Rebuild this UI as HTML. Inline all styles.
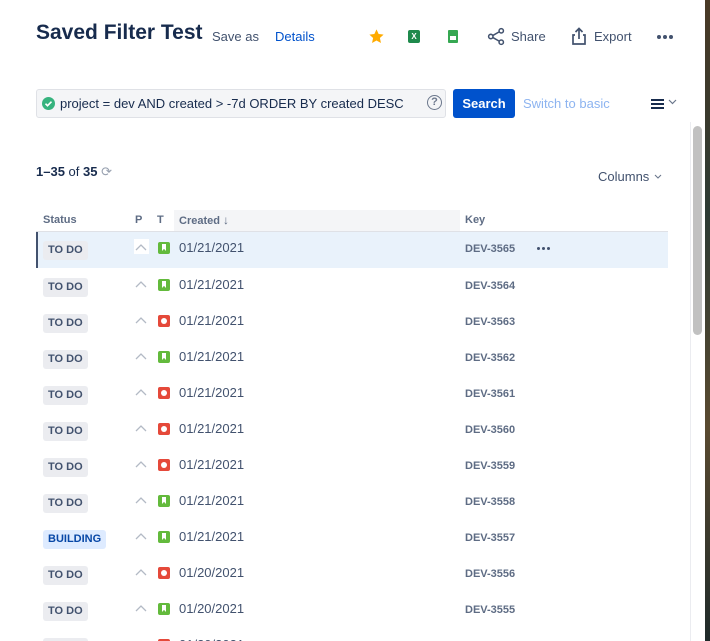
<!DOCTYPE html>
<html><head><meta charset="utf-8"><style>
*{margin:0;padding:0;box-sizing:border-box}
html,body{width:710px;height:641px;overflow:hidden}
body{background:#fff;font-family:"Liberation Sans",sans-serif;position:relative;color:#172b4d}
.a{position:absolute}
.edge{left:705px;top:0;width:5px;height:641px;background:linear-gradient(#4a3a26,#2c3a33,#5a4a30,#1f2a2a)}
.row{position:absolute;left:36px;width:632px;height:36px}
.st{position:absolute;left:7px;top:9px;height:19px;padding:0 5px;background:#ebecf0;border-radius:3px;font-size:11px;font-weight:bold;color:#42526e;line-height:19px}
.pr{position:absolute;left:99px;top:11px;width:12px;height:8px}
.ty{position:absolute;left:122px;top:10px;width:12px;height:12px;border-radius:2px}
.g{background:#63ba3c}.r{background:#e5493a}
.g:after{content:"";position:absolute;left:4px;top:2px;width:4px;height:7px;background:#fff;clip-path:polygon(0 0,100% 0,100% 100%,50% 70%,0 100%)}
.r:after{content:"";position:absolute;left:3px;top:3px;width:6px;height:6px;border-radius:50%;background:#fff}
.dt{position:absolute;left:143px;top:8px;font-size:13px;color:#42526e}
.k{position:absolute;left:429px;top:11px;font-size:11px;font-weight:bold;color:#5e6c84}
</style></head><body>
<div class="a edge"></div>
<div class="a" style="left:36px;top:21px;font-size:21px;font-weight:bold;color:#172b4d">Saved Filter Test</div>
<div class="a" style="left:212px;top:29px;font-size:13px;color:#42526e">Save as</div>
<div class="a" style="left:275px;top:29px;font-size:13px;color:#0052cc">Details</div>
<svg class="a" style="left:368px;top:28px" width="17" height="17" viewBox="0 0 24 24"><path d="M12 2l3 6.5 7 .8-5.2 4.8 1.5 7L12 17.6 5.7 21.1l1.5-7L2 9.3l7-.8z" fill="#ffab00"/></svg>
<div class="a" style="left:408px;top:30px;width:12px;height:13px;background:#1f8a4c;border-radius:2px;color:#fff;font-size:8px;font-weight:bold;line-height:13px;text-align:center">X</div>
<div class="a" style="left:448px;top:30px;width:10px;height:13px;background:#36a852;border-radius:1px"><div style="position:absolute;left:2px;top:6px;width:6px;height:4px;background:#fff"></div></div>
<svg class="a" style="left:487px;top:27px" width="19" height="19" viewBox="0 0 20 20" fill="none" stroke="#42526e" stroke-width="1.6"><circle cx="15" cy="4" r="2.3"/><circle cx="4" cy="10" r="2.3"/><circle cx="15" cy="16" r="2.3"/><path d="M6 9l7-4M6 11l7 4"/></svg>
<div class="a" style="left:511px;top:29px;font-size:13px;color:#42526e">Share</div>
<svg class="a" style="left:571px;top:27px" width="16" height="19" viewBox="0 0 16 19" fill="none" stroke="#42526e" stroke-width="1.7"><path d="M4 8H2v9h12V8h-2M8 12V2M4.5 5L8 1.5 11.5 5"/></svg>
<div class="a" style="left:594px;top:29px;font-size:13px;color:#42526e">Export</div>
<div class="a" style="left:657px;top:35px;width:4px;height:4px;border-radius:50%;background:#42526e;box-shadow:6px 0 0 #42526e,12px 0 0 #42526e"></div>
<div class="a" style="left:36px;top:89px;width:410px;height:29px;background:#f4f5f7;border:1px solid #dfe1e6;border-radius:3px"></div>
<div class="a" style="left:42px;top:97px;width:13px;height:13px;border-radius:50%;background:#36b37e"><svg width="13" height="13" viewBox="0 0 13 13"><path d="M3.5 6.7l2 2 4-4" stroke="#fff" stroke-width="1.6" fill="none"/></svg></div>
<div class="a" style="left:60px;top:96px;font-size:13px;color:#172b4d">project = dev AND created &gt; -7d ORDER BY created DESC</div>
<div class="a" style="left:427px;top:95px;width:15px;height:15px;border:1.5px solid #6b778c;border-radius:50%;font-size:11px;text-align:center;line-height:12px;color:#6b778c;font-weight:bold">?</div>
<div class="a" style="left:453px;top:89px;width:62px;height:29px;background:#0052cc;border-radius:3px;color:#fff;font-size:13px;font-weight:bold;text-align:center;line-height:29px">Search</div>
<div class="a" style="left:523px;top:96px;font-size:13px;color:#8db4f0">Switch to basic</div>
<div class="a" style="left:651px;top:99px;width:13px;height:2px;background:#172b4d;box-shadow:0 4px 0 #172b4d,0 8px 0 #172b4d"></div>
<svg class="a" style="left:668px;top:99px" width="9" height="6"><path d="M1 1l3.5 3.5L8 1" stroke="#6b778c" fill="none" stroke-width="1.2"/></svg>
<div class="a" style="left:690px;top:122px;width:1px;height:519px;background:#ebecf0"></div>
<div class="a" style="left:693px;top:126px;width:9px;height:209px;background:#c1c1c1;border-radius:5px"></div>
<div class="a" style="left:36px;top:164px;font-size:13px;color:#172b4d"><b>1–35</b> of <b>35</b> <span style="color:#97a0af;font-size:13px">⟳</span></div>
<div class="a" style="left:598px;top:169px;font-size:13px;color:#42526e">Columns</div>
<svg class="a" style="left:654px;top:174px" width="8" height="6"><path d="M1 1l3 3 3-3" stroke="#6b778c" fill="none" stroke-width="1.1"/></svg>
<div class="a" style="left:174px;top:210px;width:286px;height:21px;background:#f4f5f7"></div>
<div class="a" style="left:36px;top:231px;width:632px;height:1px;background:#dfe1e6"></div>
<div class="a" style="left:43px;top:214px;font-size:11px;font-weight:bold;color:#5e6c84">Status</div>
<div class="a" style="left:135px;top:214px;font-size:11px;font-weight:bold;color:#5e6c84">P</div>
<div class="a" style="left:157px;top:214px;font-size:11px;font-weight:bold;color:#5e6c84">T</div>
<div class="a" style="left:179px;top:213px;font-size:11px;font-weight:bold;color:#5e6c84">Created <span style="font-size:12px">↓</span></div>
<div class="a" style="left:465px;top:214px;font-size:11px;font-weight:bold;color:#5e6c84">Key</div>
<div class="row" style="top:232px;background:#e9f2fb;border-left:2px solid #42526e"></div>
<svg width="0" height="0" style="position:absolute"><defs><path id="ch" d="M1 7l5-5 5 5" stroke="#b3bac5" stroke-width="1.3" fill="none"/></defs></svg>
<div class="row" style="top:232px"><div class="a" style="left:98px;top:7px;width:15px;height:15px;background:#fff"></div><div class="st">TO DO</div><svg class="pr"><use href="#ch"/></svg><div class="ty g"></div><div class="dt">01/21/2021</div><div class="k">DEV-3565</div><div class="a" style="left:501px;top:15px;width:3px;height:3px;border-radius:50%;background:#42526e;box-shadow:5px 0 0 #42526e,10px 0 0 #42526e"></div></div>
<div class="row" style="top:269px"><div class="st">TO DO</div><svg class="pr"><use href="#ch"/></svg><div class="ty g"></div><div class="dt">01/21/2021</div><div class="k">DEV-3564</div></div>
<div class="row" style="top:305px"><div class="st">TO DO</div><svg class="pr"><use href="#ch"/></svg><div class="ty r"></div><div class="dt">01/21/2021</div><div class="k">DEV-3563</div></div>
<div class="row" style="top:341px"><div class="st">TO DO</div><svg class="pr"><use href="#ch"/></svg><div class="ty g"></div><div class="dt">01/21/2021</div><div class="k">DEV-3562</div></div>
<div class="row" style="top:377px"><div class="st">TO DO</div><svg class="pr"><use href="#ch"/></svg><div class="ty r"></div><div class="dt">01/21/2021</div><div class="k">DEV-3561</div></div>
<div class="row" style="top:413px"><div class="st">TO DO</div><svg class="pr"><use href="#ch"/></svg><div class="ty r"></div><div class="dt">01/21/2021</div><div class="k">DEV-3560</div></div>
<div class="row" style="top:449px"><div class="st">TO DO</div><svg class="pr"><use href="#ch"/></svg><div class="ty r"></div><div class="dt">01/21/2021</div><div class="k">DEV-3559</div></div>
<div class="row" style="top:485px"><div class="st">TO DO</div><svg class="pr"><use href="#ch"/></svg><div class="ty g"></div><div class="dt">01/21/2021</div><div class="k">DEV-3558</div></div>
<div class="row" style="top:521px"><div class="st" style="background:#deebff;color:#0747a6">BUILDING</div><svg class="pr"><use href="#ch"/></svg><div class="ty g"></div><div class="dt">01/21/2021</div><div class="k">DEV-3557</div></div>
<div class="row" style="top:557px"><div class="st">TO DO</div><svg class="pr"><use href="#ch"/></svg><div class="ty r"></div><div class="dt">01/20/2021</div><div class="k">DEV-3556</div></div>
<div class="row" style="top:593px"><div class="st">TO DO</div><svg class="pr"><use href="#ch"/></svg><div class="ty g"></div><div class="dt">01/20/2021</div><div class="k">DEV-3555</div></div>
<div class="row" style="top:629px"><div class="st">TO DO</div><svg class="pr"><path d="M1 7l5-5 5 5" stroke="#ff8b00" stroke-width="1.6" fill="none"/></svg><div class="ty r"></div><div class="dt">01/20/2021</div><div class="k">DEV-3554</div></div>
</body></html>
